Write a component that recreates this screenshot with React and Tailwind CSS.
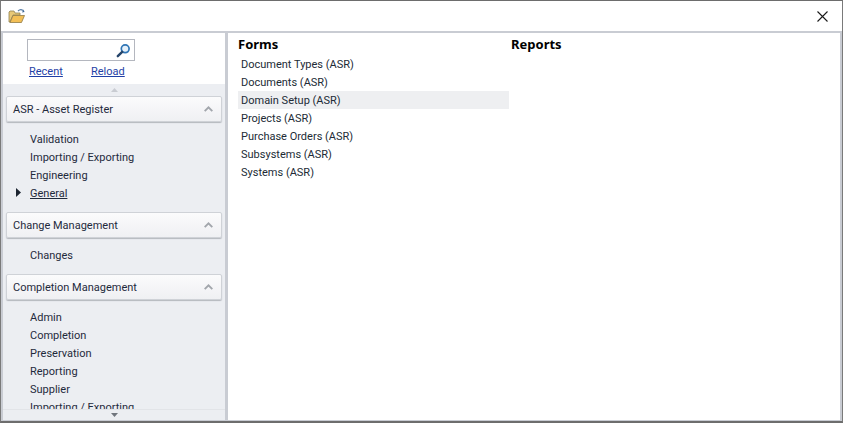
import React from "react";

function Chevron() {
  return (
    <svg width="9" height="6" viewBox="0 0 9 6" className="mr-[5px]">
      <path d="M0.7 5.2 L4.5 1.4 L8.3 5.2" fill="none" stroke="#a2a6ac" strokeWidth="1.9" />
    </svg>
  );
}

function Group({ title, items, active }) {
  return (
    <div className="mb-[10px]">
      <div className="mx-[3px] h-[26px] flex items-center justify-between pl-[6px] pr-[3px] rounded-[2px] border border-[#cfd2d7] bg-gradient-to-b from-[#fbfbfc] to-[#eff0f3] shadow-[0_1px_1px_#b4b7bd] text-[#1f2a3c]">
        <span>{title}</span>
        <Chevron />
      </div>
      <div className="pt-[8px]">
        {items.map((t) => (
          <div key={t} className="relative h-[18px] flex items-center pl-[27px] text-[#1f2a3c]">
            {t === active && (
              <svg width="5" height="9" viewBox="0 0 5 9" className="absolute left-[13px] top-[4px]">
                <path d="M0 0 L5 4.5 L0 9 Z" fill="#1c2430" />
              </svg>
            )}
            <span className={t === active ? "underline" : ""}>{t}</span>
          </div>
        ))}
      </div>
    </div>
  );
}

export default function App() {
  const forms = ["Document Types (ASR)", "Documents (ASR)", "Domain Setup (ASR)", "Projects (ASR)", "Purchase Orders (ASR)", "Subsystems (ASR)", "Systems (ASR)"];
  return (
    <div className="w-[843px] h-[423px] flex flex-col bg-white border-t border-t-[#6d6d6d] border-x border-x-[#7a7a7a] border-b-2 border-b-[#6d6d6d] overflow-hidden text-[11px] leading-none font-['Roboto',sans-serif]">
      <div className="h-[30px] shrink-0 flex items-center justify-between pl-[7px] pr-[14px]">
        <svg width="18" height="16" viewBox="0 0 18 16">
          <path d="M1 14 V4 L2 3 H6 L7 5 H12 V7 H5 L2 14 Z" fill="#e8c877" stroke="#8f8052" strokeWidth="0.8" />
          <path d="M2 14.5 L5 7.5 H16.5 L13.5 14.5 Z" fill="#f3bf56" stroke="#8f7a45" strokeWidth="0.8" />
          <path d="M10 3 Q12.5 0.5 15 2.5" fill="none" stroke="#5a7fa8" strokeWidth="1.2" />
          <path d="M14 4.5 L16.5 4 L15.5 1.5 Z" fill="#3f6795" />
        </svg>
        <svg width="11" height="11" viewBox="0 0 11 11">
          <path d="M0.5 0.5 L10.5 10.5 M10.5 0.5 L0.5 10.5" stroke="#1a1a1a" strokeWidth="1.1" />
        </svg>
      </div>
      <div className="flex-1 min-h-0 flex px-[1px] bg-[#c9ccd3]">
        <div className="w-[224px] shrink-0 flex flex-col border border-t-2 border-[#c9ccd3] bg-[#eceef2] overflow-hidden">
          <div className="h-[51px] shrink-0 bg-white pl-[24px] pt-[6px]">
            <div className="w-[108px] h-[22px] border border-[#b4b7bf] flex items-center justify-end pr-[3px]">
              <svg width="15" height="15" viewBox="0 0 15 15">
                <circle cx="9.2" cy="5.8" r="3.9" fill="#e6f1fa" stroke="#2f75b5" strokeWidth="1.7" />
                <path d="M6.2 8.8 L1.8 13.2" stroke="#26456b" strokeWidth="2.4" strokeLinecap="round" />
              </svg>
            </div>
            <div className="flex mt-[5px] pl-[2px] text-[#1f3fa6] underline">
              <span className="w-[62px]">Recent</span>
              <span>Reload</span>
            </div>
          </div>
          <div className="h-[12px] shrink-0 flex items-center justify-center">
            <svg width="7" height="4" viewBox="0 0 7 4"><path d="M0 4 L3.5 0 L7 4 Z" fill="#c9ccd2" /></svg>
          </div>
          <div className="flex-1 min-h-0 overflow-hidden">
            <Group title="ASR - Asset Register" items={["Validation", "Importing / Exporting", "Engineering", "General"]} active="General" />
            <Group title="Change Management" items={["Changes"]} />
            <Group title="Completion Management" items={["Admin", "Completion", "Preservation", "Reporting", "Supplier", "Importing / Exporting"]} />
          </div>
          <div className="h-[11px] shrink-0 flex items-center justify-center border-t border-t-[#e2e4e8] bg-[#eceef2]">
            <svg width="7" height="4" viewBox="0 0 7 4"><path d="M0 0 L3.5 4 L7 0 Z" fill="#70757d" /></svg>
          </div>
        </div>
        <div className="w-[2px] shrink-0" />
        <div className="flex-1 flex border-t-2 border-b border-r border-[#c9ccd3] bg-white pl-[10px] text-[#222b36]">
          <div className="w-[271px] shrink-0">
            <div className="h-[22px] pt-[5px] font-bold font-['Noto_Sans',sans-serif] text-[13px] text-black">Forms</div>
            {forms.map((f, i) => (
              <div key={f} className={"h-[18px] flex items-center pl-[3px] " + (i === 2 ? "bg-[#eeeff1]" : "")}>{f}</div>
            ))}
          </div>
          <div className="pl-[2px] pt-[5px] font-bold font-['Noto_Sans',sans-serif] text-[13px] text-black">Reports</div>
        </div>
      </div>
    </div>
  );
}
